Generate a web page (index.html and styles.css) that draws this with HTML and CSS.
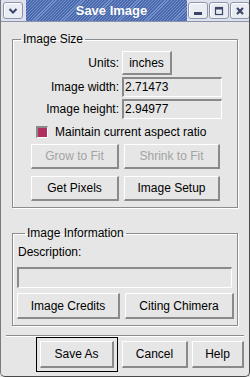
FILE: index.html
```html
<!DOCTYPE html>
<html>
<head>
<meta charset="utf-8">
<link rel="stylesheet" href="styles.css">
</head>
<body>
<div class="win">
  <div class="titlebar">
    <div class="tb-side tb-left">
      <span class="tbtn"><svg width="10" height="8" viewBox="0 0 10 8"><polyline points="1.5,2 5,5.5 8.5,2" fill="none" stroke="#3b4566" stroke-width="2"/></svg></span>
    </div>
    <div class="title">Save Image</div>
    <div class="tb-side tb-right">
      <span class="tbtn"><svg width="10" height="10" viewBox="0 0 10 10"><rect x="1" y="6" width="8" height="3" fill="#3b4566"/></svg></span>
      <span class="tbtn"><svg width="10" height="10" viewBox="0 0 10 10"><rect x="1.5" y="1.5" width="7" height="7" fill="none" stroke="#3b4566" stroke-width="1.2"/><rect x="1" y="1" width="8" height="2.5" fill="#3b4566"/></svg></span>
      <span class="tbtn"><svg width="10" height="10" viewBox="0 0 10 10"><path d="M2 2 L8 8 M8 2 L2 8" stroke="#3b4566" stroke-width="2.2"/></svg></span>
    </div>
  </div>
  <div class="content">
    <fieldset class="group g1">
      <legend>Image Size</legend>
      <div class="form">
        <span class="lbl">Units:</span>
        <div><div class="btn units">inches</div></div>
        <span class="lbl">Image width:</span>
        <div class="entry val">2.71473</div>
        <span class="lbl">Image height:</span>
        <div class="entry val">2.94977</div>
      </div>
      <div class="check"><span class="box"></span><span>Maintain current aspect ratio</span></div>
      <div class="btngrid">
        <div class="btn disabled">Grow to Fit</div>
        <div class="btn disabled">Shrink to Fit</div>
        <div class="btn">Get Pixels</div>
        <div class="btn">Image Setup</div>
      </div>
    </fieldset>
    <fieldset class="group g2">
      <legend>Image Information</legend>
      <div class="desc">Description:</div>
      <div class="entry wide"></div>
      <div class="btngrid2">
        <div class="btn">Image Credits</div>
        <div class="btn">Citing Chimera</div>
      </div>
    </fieldset>
    <div class="sep"></div>
    <div class="actions">
      <div class="default"><div class="btn save">Save As</div></div>
      <div class="btn cancel">Cancel</div>
      <div class="btn help">Help</div>
    </div>
  </div>
</div>
</body>
</html>
```

FILE: styles.css
```css
* { box-sizing: border-box; }
html, body { margin: 0; padding: 0; background: #e6e6e6; }
body { font-family: "Liberation Sans", Arial, sans-serif; font-size: 12px; color: #000; }

.win {
  width: 250px;
  height: 377px;
  background: #e6e6e6;
  border-left: 1px solid #7a7a7a;
  border-right: 1px solid #4a4a4a;
  border-bottom: 1px solid #4a4a4a;
  border-radius: 0 0 5px 5px;
  display: flex;
  flex-direction: column;
  overflow: hidden;
}

.titlebar {
  height: 22px;
  display: flex;
  margin: 0 -1px;
  border-bottom: 1px solid #8a92ac;
  background: #dde1eb;
}
.tb-side { display: flex; align-items: flex-start; padding-top: 2px; gap: 1px; }
.tb-left { width: 26px; padding-left: 3px; }
.tb-right { width: 63px; padding-left: 1px; }
.tbtn {
  width: 20px;
  height: 17px;
  background: #e9ecf3;
  border: 1px solid #8d95ae;
  border-radius: 3px;
  box-shadow: inset 1px 1px 0 #fff;
  display: flex;
  align-items: center;
  justify-content: center;
}
.title {
  flex: 1;
  color: #fff;
  font-weight: bold;
  font-size: 13px;
  text-align: center;
  line-height: 21px;
  padding-left: 10px;
  background: #4a69ad repeating-linear-gradient(135deg, #4a69ad 0 1.4px, #7490ca 1.4px 2.2px);
  text-shadow: 0 0 1px #3a5590;
}

.content { padding: 10px 0 0 0; display: flex; flex-direction: column; }

.group {
  margin: 0 11px;
  border: 1px solid #8c8c8c;
  box-shadow: 1px 1px 0 #fff, inset 1px 1px 0 #fff;
  min-width: 0;
}
.group legend {
  margin-left: 8px;
  padding: 0 2px;
  line-height: 14px;
  font-size: 12px;
}
.g1 { padding: 5px 0 6px 0; }
.g2 { padding: 5px 5px 6px 4px; margin-top: 18px; }

.form {
  display: grid;
  grid-template-columns: 106px 100px;
  column-gap: 3px;
  row-gap: 2px;
  align-items: center;
}
.lbl { text-align: right; }

.btn {
  border-style: solid;
  border-width: 1px 2px 2px 1px;
  border-color: #fff #8a8a8a #8a8a8a #fff;
  background: #e6e6e6;
  display: flex;
  align-items: center;
  justify-content: center;
  height: 25px;
  white-space: nowrap;
}
.btn.disabled { color: #a3a3a3; }
.units { width: 50px; height: 24px; }

.entry {
  border-style: solid;
  border-width: 2px 1px 1px 2px;
  border-color: #8a8a8a #fff #fff #8a8a8a;
  background: #e6e6e6;
  height: 20px;
  padding-left: 1px;
  line-height: 16px;
}
.val { width: 100px; }

.check {
  display: flex;
  align-items: center;
  gap: 7px;
  margin: 6px 0 0 23px;
  height: 14px;
}
.box {
  width: 12px;
  height: 12px;
  background: #b03060;
  border-style: solid;
  border-width: 2px 1px 1px 2px;
  border-color: #8a8a8a #fff #fff #8a8a8a;
}

.btngrid {
  display: grid;
  grid-template-columns: 88px 96px;
  column-gap: 5px;
  row-gap: 7px;
  margin: 5px 0 0 18px;
}

.desc { line-height: 14px; padding-left: 1px; }
.wide { margin-top: 8px; height: 21px; }
.btngrid2 {
  display: grid;
  grid-template-columns: 103px 109px;
  column-gap: 5px;
  margin-top: 5px;
}
.btngrid2 .btn { height: 26px; }

.sep {
  margin: 9px 5px 0 5px;
  height: 2px;
  border-top: 1px solid #8c8c8c;
  border-bottom: 1px solid #fff;
}

.actions {
  display: flex;
  justify-content: flex-end;
  align-items: center;
  gap: 4px;
  padding-right: 5px;
  margin-top: 0;
}
.default {
  border: 1px solid #000;
  padding: 3px;
}
.save { width: 74px; height: 27px; }
.cancel { width: 66px; height: 27px; }
.help { width: 52px; height: 27px; }
```
